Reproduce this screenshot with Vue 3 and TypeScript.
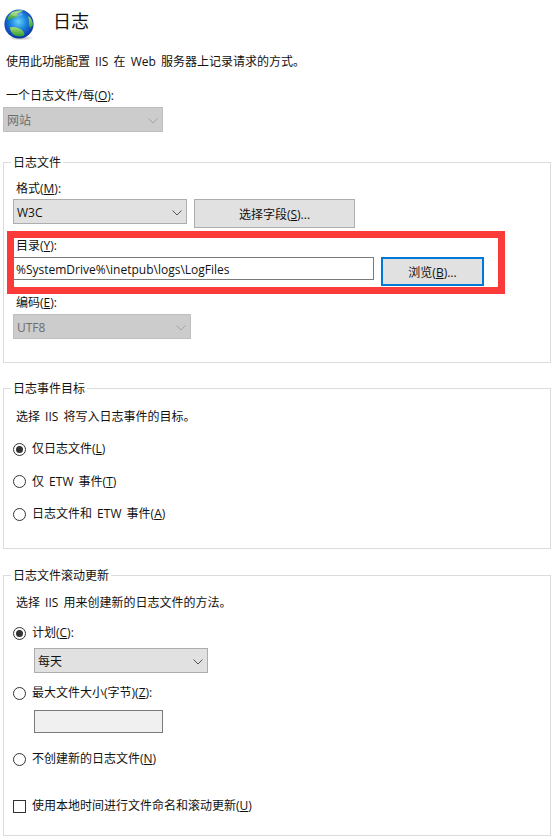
<template>
  <main class="page">
    <header class="head">
      <svg class="globe" width="30" height="32" viewBox="0 0 30 32">
        <defs>
          <radialGradient id="sea" cx="0.48" cy="0.42" r="0.6">
            <stop offset="0" stop-color="#6ad2f8" />
            <stop offset="0.45" stop-color="#1c86e0" />
            <stop offset="0.85" stop-color="#0d44b0" />
            <stop offset="1" stop-color="#0a2c88" />
          </radialGradient>
          <linearGradient id="land" x1="0" y1="0" x2="0" y2="1">
            <stop offset="0" stop-color="#b0e070" />
            <stop offset="1" stop-color="#2c9a33" />
          </linearGradient>
          <radialGradient id="shade" cx="0.5" cy="0.5" r="0.5">
            <stop offset="0" stop-color="#777" stop-opacity="0.6" />
            <stop offset="1" stop-color="#777" stop-opacity="0" />
          </radialGradient>
        </defs>
        <ellipse cx="17" cy="29" rx="13" ry="2.5" fill="url(#shade)" />
        <circle cx="15" cy="15" r="14.6" fill="url(#sea)" />
        <path d="M7 4 C10 2 15 1 19 1.4 C18 3 15 3 13.5 4.5 C12.5 6 14 7.5 12 8.5 C10 9.5 8 8.5 6.5 10 C5.5 11 4.5 11.5 3.4 11 C3.8 8.5 5 6 7 4 Z" fill="url(#land)" />
        <path d="M24.5 7 C27 9 28.6 12 29 15.5 C28 17.5 27 18.5 26 19 C24.8 17 24.6 15 25 13 C25.3 11 24 9 24.5 7 Z" fill="url(#land)" />
        <path d="M6 18.5 C9 17 14 18.5 17 20.5 C20 22.5 21 25 20 26.5 C17 28 13 27.6 10 26 C7.5 24 6 21 6 18.5 Z" fill="url(#land)" />
        <ellipse cx="13" cy="5" rx="6" ry="2.5" fill="#fff" opacity="0.25" />
      </svg>
      <h1 class="title">日志</h1>
    </header>

    <p class="intro">使用此功能配置 IIS 在 Web 服务器上记录请求的方式。</p>

    <div class="top-label">一个日志文件/每(<u>O</u>):</div>
    <div class="select disabled site-select">
      <span>网站</span>
      <svg class="chevron" width="10" height="6" viewBox="0 0 10 6"><path d="M.5.5 5 5 9.5.5" /></svg>
    </div>

    <section class="group file-group">
      <span class="legend">日志文件</span>
      <div class="label">格式(<u>M</u>):</div>
      <div class="row format-row">
        <div class="select format-select">
          <span>W3C</span>
          <svg class="chevron" width="10" height="6" viewBox="0 0 10 6"><path d="M.5.5 5 5 9.5.5" /></svg>
        </div>
        <button class="btn fields-btn">选择字段(<u>S</u>)...</button>
      </div>
      <div class="label dir-label">目录(<u>Y</u>):</div>
      <div class="row dir-row">
        <div class="input dir-input">%SystemDrive%\inetpub\logs\LogFiles</div>
        <button class="btn browse-btn">浏览(<u>B</u>)...</button>
      </div>
      <div class="label enc-label">编码(<u>E</u>):</div>
      <div class="select disabled enc-select">
        <span>UTF8</span>
        <svg class="chevron" width="10" height="6" viewBox="0 0 10 6"><path d="M.5.5 5 5 9.5.5" /></svg>
      </div>
      <div class="highlight"></div>
    </section>

    <section class="group event-group">
      <span class="legend">日志事件目标</span>
      <p class="group-desc">选择 IIS 将写入日志事件的目标。</p>
      <div class="event-options">
        <label v-for="opt in eventOptions" :key="opt.key" class="choice">
          <span class="radio" :class="{ on: opt.on }"></span>
          <span class="choice-text">{{ opt.text }}(<u>{{ opt.key }}</u>)</span>
        </label>
      </div>
    </section>

    <section class="group roll-group">
      <span class="legend">日志文件滚动更新</span>
      <p class="group-desc">选择 IIS 用来创建新的日志文件的方法。</p>
      <label class="choice plan">
        <span class="radio on"></span>
        <span class="choice-text">计划(<u>C</u>):</span>
      </label>
      <div class="select plan-select">
        <span>每天</span>
        <svg class="chevron" width="10" height="6" viewBox="0 0 10 6"><path d="M.5.5 5 5 9.5.5" /></svg>
      </div>
      <label class="choice max-size">
        <span class="radio"></span>
        <span class="choice-text">最大文件大小(字节)(<u>Z</u>):</span>
      </label>
      <div class="input size-input"></div>
      <label class="choice no-new">
        <span class="radio"></span>
        <span class="choice-text">不创建新的日志文件(<u>N</u>)</span>
      </label>
      <label class="choice local-time">
        <span class="check"></span>
        <span class="choice-text">使用本地时间进行文件命名和滚动更新(<u>U</u>)</span>
      </label>
    </section>
  </main>
</template>

<script setup lang="ts">
interface EventOption {
  text: string
  key: string
  on: boolean
}

const eventOptions: EventOption[] = [
  { text: '仅日志文件', key: 'L', on: true },
  { text: '仅 ETW 事件', key: 'T', on: false },
  { text: '日志文件和 ETW 事件', key: 'A', on: false },
]
</script>

<style scoped>
.page {
  width: 558px;
  height: 840px;
  overflow: hidden;
  background: #fff;
  color: #111;
  font: 12px/18px "Open Sans", "Noto Sans CJK SC", sans-serif;
  word-spacing: 2px;
}
p, h1 { margin: 0; }
u { text-underline-offset: 1px; }

.head {
  display: flex;
  align-items: flex-start;
  padding: 9px 0 0 4px;
  height: 30px;
  box-sizing: content-box;
}
.globe { flex: none; }
.title {
  margin: 1px 0 0 19px;
  font-size: 18px;
  font-weight: 400;
  line-height: 22px;
}
.intro { margin: 14px 0 0 6px; }
.top-label { margin: 16px 0 0 6px; }

.select {
  box-sizing: border-box;
  display: flex;
  align-items: center;
  justify-content: space-between;
  height: 25px;
  padding: 2px 4px 0 3px;
  background: #e1e1e1;
  border: 1px solid #adadad;
  color: #111;
}
.select.disabled {
  background: #cccccc;
  border-color: #bfbfbf;
  color: #6d6d6d;
}
.chevron {
  fill: none;
  stroke: #555;
  stroke-width: 1;
}
.disabled .chevron { stroke: #a4a4a4; }
.site-select { width: 160px; margin: 2px 0 0 3px; }

.group {
  position: relative;
  box-sizing: border-box;
  width: 548px;
  margin-left: 3px;
  padding-left: 9px;
  border: 1px solid #dcdcdc;
}
.legend {
  position: absolute;
  left: 7px;
  top: -9px;
  padding: 0 2px;
  background: #fff;
}
.label { padding-left: 3px; }

.file-group { height: 201px; margin-top: 30px; padding-top: 17px; }
.row { display: flex; align-items: flex-start; }
.format-row { gap: 7px; margin-top: 1px; }
.format-select { width: 174px; }
.btn {
  box-sizing: border-box;
  height: 29px;
  padding: 2px 0 0;
  background: #e1e1e1;
  border: 1px solid #adadad;
  color: #111;
  font: inherit;
}
.fields-btn { width: 161px; }
.dir-label { margin-top: 9px; }
.dir-row { gap: 7px; margin-top: 2px; }
.input {
  box-sizing: border-box;
  height: 23px;
  border: 1px solid #7a7a7a;
  line-height: 23px;
}
.dir-input { width: 361px; padding-left: 2px; background: #fff; }
.browse-btn { width: 103px; border: 2px solid #0078d7; }
.enc-label { margin-top: 8px; }
.enc-select { width: 178px; margin-top: 2px; }
.highlight {
  position: absolute;
  left: 3px;
  top: 68px;
  box-sizing: border-box;
  width: 498px;
  height: 63px;
  border: 7px solid #fb3a3a;
}

.group-desc { padding-left: 3px; }
.choice {
  display: flex;
  align-items: center;
  gap: 6px;
  height: 20px;
}
.radio {
  position: relative;
  flex: none;
  box-sizing: border-box;
  width: 13px;
  height: 13px;
  border: 1px solid #333;
  border-radius: 50%;
}
.radio.on::after {
  content: "";
  position: absolute;
  left: 2px;
  top: 2px;
  width: 7px;
  height: 7px;
  border-radius: 50%;
  background: #333;
}
.check {
  flex: none;
  box-sizing: border-box;
  width: 13px;
  height: 13px;
  border: 1px solid #333;
}

.event-group { height: 161px; margin-top: 25px; padding-top: 19px; }
.event-options {
  display: flex;
  flex-direction: column;
  gap: 12.5px;
  margin-top: 13px;
}

.roll-group { height: 261px; margin-top: 26px; padding-top: 18px; }
.plan { margin-top: 11px; }
.plan-select { width: 174px; margin: 5px 0 0 21px; }
.max-size { margin-top: 10px; }
.size-input { width: 129px; margin: 7px 0 0 21px; background: #f0f0f0; }
.no-new { margin-top: 16px; }
.local-time { margin-top: 27px; }
</style>
